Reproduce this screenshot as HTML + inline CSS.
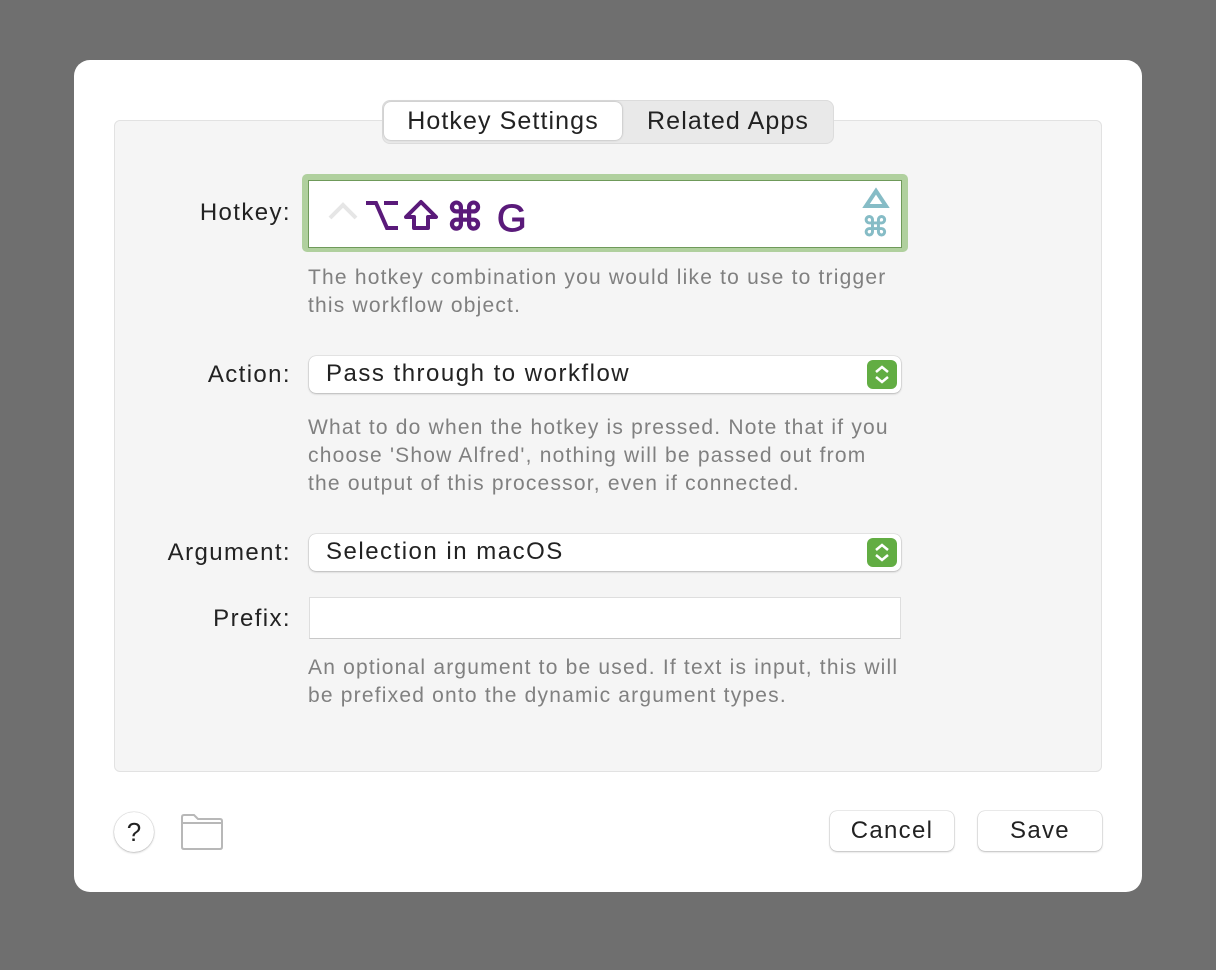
<!DOCTYPE html>
<html><head><style>
body{margin:0;width:1216px;height:970px;background:#6f6f6f;font-family:"Liberation Sans",sans-serif;position:relative;overflow:hidden}
.win{position:absolute;left:74px;top:60px;width:1068px;height:832px;background:#fff;border-radius:16px}
.panel{position:absolute;left:114px;top:120px;width:986px;height:650px;background:#f5f5f5;border:1px solid #e2e2e2;border-radius:6px}
.seg{position:absolute;left:382px;top:100px;width:450px;height:42px;background:#e9e9e9;border:1px solid #dcdcdc;border-radius:8px}
.seg .a{position:absolute;left:1px;top:1px;width:238px;height:38px;background:#fff;border-radius:7px;box-shadow:0 0 2px rgba(0,0,0,.3);font-size:25px;letter-spacing:1.1px;color:#222;text-align:center;line-height:38px}
.seg .b{position:absolute;left:240px;top:1px;width:210px;height:38px;font-size:25px;letter-spacing:1.1px;color:#222;text-align:center;line-height:38px}
.lbl{position:absolute;font-size:24px;letter-spacing:1.4px;color:#222;text-align:right;width:200px}
.help{position:absolute;left:308px;font-size:21px;letter-spacing:1.2px;color:#808080;line-height:28px;white-space:nowrap}
.pop{position:absolute;left:309px;width:592px;height:37px;background:#fff;border-radius:7px;box-shadow:0 0 1px rgba(0,0,0,.4),0 1px 2px rgba(0,0,0,.2);font-size:24px;letter-spacing:1.5px;color:#222;line-height:36px;padding-left:17px;box-sizing:border-box}
.pop .ic{position:absolute;right:4px;top:4px;width:30px;height:29px;background:#62ad43;border-radius:6px}
.pop .ic svg{position:absolute;left:0;top:0}
.btn{position:absolute;top:811px;height:40px;background:#fff;border-radius:7px;box-shadow:0 0 1px rgba(0,0,0,.45),0 1px 2px rgba(0,0,0,.2);font-size:24px;letter-spacing:1.3px;color:#222;text-align:center;line-height:40px}
</style></head><body>
<div class="win"></div>
<div class="panel"></div>
<div class="seg"><div class="a">Hotkey Settings</div><div class="b">Related Apps</div></div>

<div class="lbl" style="left:91px;top:199px">Hotkey:</div>
<div style="position:absolute;left:302px;top:174px;width:606px;height:78px;background:#b0d09e;border-radius:5px"></div>
<div style="position:absolute;left:308px;top:180px;width:592px;height:66px;background:#fff;border:1px solid #6f9a5a"></div>
<svg style="position:absolute;left:320px;top:190px" width="220" height="50" viewBox="0 0 220 50">
<path d="M10 28 L23 15 L36 28" fill="none" stroke="#e6e6e6" stroke-width="4"/>
<path d="M46 13 H56 L67 38 H78 M64 13 H78" fill="none" stroke="#5a1a7a" stroke-width="4"/>
<path d="M86 27 L101 12 L116 27 H108 V38 H94 V27 Z" fill="none" stroke="#5a1a7a" stroke-width="4" stroke-linejoin="round"/>
<text x="126" y="40" font-family="DejaVu Sans" font-size="38" fill="#5a1a7a" stroke="#5a1a7a" stroke-width="1.5">⌘</text>
<text x="177" y="41" font-family="Liberation Sans" font-size="38" fill="#5a1a7a" stroke="#5a1a7a" stroke-width="1">G</text>
</svg>
<svg style="position:absolute;left:860px;top:186px" width="32" height="56" viewBox="0 0 32 56">
<path d="M16 5 L26 20 H6 Z" fill="none" stroke="#86bcc6" stroke-width="4"/>
<text x="2" y="50" font-family="DejaVu Sans" font-size="27" fill="#86bcc6" stroke="#86bcc6" stroke-width="1">⌘</text>
</svg>
<div class="help" style="top:264px">The hotkey combination you would like to use to trigger<br>this workflow object.</div>

<div class="lbl" style="left:91px;top:361px">Action:</div>
<div class="pop" style="top:356px">Pass through to workflow<div class="ic"><svg width="30" height="29"><path d="M9 12 L15 7 L21 12 M9 17 L15 22 L21 17" fill="none" stroke="#fff" stroke-width="2.5"/></svg></div></div>
<div class="help" style="top:414px">What to do when the hotkey is pressed. Note that if you<br>choose 'Show Alfred', nothing will be passed out from<br>the output of this processor, even if connected.</div>

<div class="lbl" style="left:91px;top:539px">Argument:</div>
<div class="pop" style="top:534px">Selection in macOS<div class="ic"><svg width="30" height="29"><path d="M9 12 L15 7 L21 12 M9 17 L15 22 L21 17" fill="none" stroke="#fff" stroke-width="2.5"/></svg></div></div>

<div class="lbl" style="left:91px;top:605px">Prefix:</div>
<div style="position:absolute;left:309px;top:597px;width:590px;height:40px;background:#fff;border:1px solid #dedede;border-bottom-color:#c8c8c8"></div>
<div class="help" style="top:654px">An optional argument to be used. If text is input, this will<br>be prefixed onto the dynamic argument types.</div>

<div style="position:absolute;left:114px;top:812px;width:40px;height:40px;border-radius:50%;background:#fff;box-shadow:0 0 1px rgba(0,0,0,.4),0 1px 2px rgba(0,0,0,.2);font-size:26px;text-align:center;line-height:40px;color:#222">?</div>
<svg style="position:absolute;left:179px;top:813px" width="46" height="38"><path d="M3 4 Q3 2 5 2 H15 L19 6 H41 Q43 6 43 8 V34 Q43 36 41 36 H5 Q3 36 3 34 Z M3 10 H43" fill="none" stroke="#b8b8b8" stroke-width="2"/></svg>
<div class="btn" style="left:830px;width:124px">Cancel</div>
<div class="btn" style="left:978px;width:124px">Save</div>
</body></html>
